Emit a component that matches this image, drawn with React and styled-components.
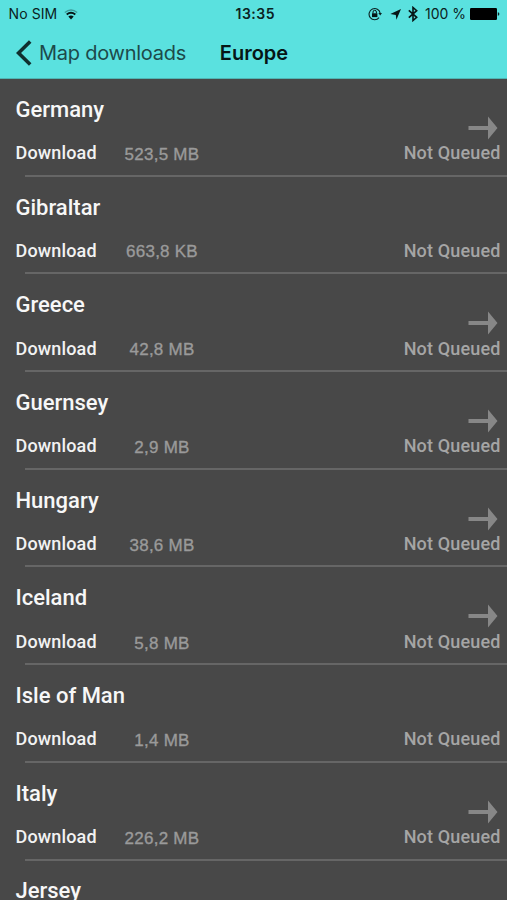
import React, { Component } from "react";
import styled, { createGlobalStyle } from "styled-components";

const GlobalStyle = createGlobalStyle`
  * {
    box-sizing: border-box;
  }

  body {
    margin: 0;
    background: #484848;
  }
`;

const Screen = styled.div`
  width: 100%;
  height: 900px;
  overflow: hidden;
  background: #484848;
  font-family: Roboto, "Liberation Sans", sans-serif;
`;

const Header = styled.header`
  height: 79px;
  background: #5ae1df;
  border-bottom: 1px solid #4fb5b4;
  color: #0b2222;
  font-family: Inter, "Liberation Sans", sans-serif;
`;

const StatusBar = styled.div`
  display: grid;
  grid-template-columns: 1fr auto 1fr;
  align-items: center;
  height: 28px;
  padding: 0 7px 0 8.5px;
  font-size: 14px;
  line-height: 28px;
  white-space: nowrap;
`;

const Carrier = styled.div`
  display: flex;
  align-items: center;
  gap: 7px;
  letter-spacing: 0.1px;
`;

const Clock = styled.div`
  padding-left: 2px;
  font-weight: 600;
  letter-spacing: 0.5px;
`;

const Indicators = styled.div`
  display: flex;
  align-items: center;
  justify-content: flex-end;
`;

const Percent = styled.span`
  margin: 0 4px 0 7px;
  letter-spacing: 0;
`;

const NavBar = styled.nav`
  display: grid;
  grid-template-columns: 1fr auto 1fr;
  align-items: center;
  height: 50px;
  padding: 0 15px 0 16px;
`;

const Back = styled.div`
  display: flex;
  align-items: center;
  gap: 7px;
  color: #1d4a4a;
  font-size: 20px;
  letter-spacing: -0.25px;
  white-space: nowrap;
`;

const Title = styled.h1`
  margin: 0;
  color: #061616;
  font-size: 20px;
  font-weight: 600;
  letter-spacing: 0;
`;

const Row = styled.section`
  display: flex;
  flex-direction: column;
  height: 97.7px;
  padding: 17.9px 0 0 15.5px;
`;

const Country = styled.h2`
  margin: 0;
  color: #f7f7f7;
  font-size: 22px;
  font-weight: 500;
  line-height: 26px;
  letter-spacing: 0;
`;

const ArrowSlot = styled.div`
  display: flex;
  justify-content: flex-end;
  height: 20px;
  margin-top: -7px;
  padding-right: 9px;
`;

const Details = styled.div`
  display: grid;
  grid-template-columns: 96.5px 100px 1fr;
  height: 39.7px;
  padding-right: 6.5px;
  padding-top: 6.5px;
  color: #a5a5a5;
  font-size: 18px;
  font-weight: 500;
  line-height: 22px;
  letter-spacing: 0.15px;
  white-space: nowrap;
`;

const Action = styled.span`
  color: #f2f2f2;
`;

const Size = styled.span`
  padding-top: 1.7px;
  color: #9a9a9a;
  font-family: "Liberation Sans", sans-serif;
  font-size: 17px;
  letter-spacing: 0.25px;
  text-align: center;
  -webkit-text-stroke: 0.35px #9a9a9a;
`;

const Status = styled.span`
  text-align: right;
`;

const Divider = styled.div`
  height: 2px;
  flex-shrink: 0;
  margin-left: 9.5px;
  background: #666;
`;

const countries = [
  { name: "Germany", size: "523,5 MB", regions: true },
  { name: "Gibraltar", size: "663,8 KB", regions: false },
  { name: "Greece", size: "42,8 MB", regions: true },
  { name: "Guernsey", size: "2,9 MB", regions: true },
  { name: "Hungary", size: "38,6 MB", regions: true },
  { name: "Iceland", size: "5,8 MB", regions: true },
  { name: "Isle of Man", size: "1,4 MB", regions: false },
  { name: "Italy", size: "226,2 MB", regions: true },
  { name: "Jersey" }
];

const WifiIcon = () => (
  <svg width="14" height="11" viewBox="0 0 14 11" fill="none">
    <path d="M0.8 3.5Q7 -1.5 13.2 3.5" stroke="#3c9a99" strokeWidth="1.3" />
    <path d="M2.7 5.4Q7 2 11.3 5.4" stroke="#061616" strokeWidth="1.9" />
    <path d="M4.3 7.5Q7 5.4 9.7 7.5L7 10.4Z" fill="#061616" />
  </svg>
);

const LockIcon = () => (
  <svg width="14" height="14" viewBox="0 0 14 14" fill="none">
    <path
      d="M11.1 10.6A5.6 5.6 0 1 1 12.2 6.3"
      stroke="#0b2222"
      strokeWidth="1.1"
    />
    <path d="M10.4 6H14L12.2 8.6Z" fill="#0b2222" />
    <rect x="4" y="6.3" width="5.4" height="3.8" fill="#061616" />
    <path d="M5 6.5V5a1.7 1.7 0 0 1 3.4 0v1.5" stroke="#061616" />
  </svg>
);

const LocationIcon = styled(({ className }) => (
  <svg className={className} width="11" height="11" viewBox="0 0 11 11">
    <path d="M11 0L6.4 10.8L5.8 6L0.3 5Z" fill="#061616" />
  </svg>
))`
  margin: 0 7px 0 8px;
`;

const BluetoothIcon = () => (
  <svg width="10" height="16" viewBox="0 0 10 16" fill="none">
    <path
      d="M0.8 4.4L8.7 11.3L5 14.5V1.5L8.7 4.7L0.8 11.6"
      stroke="#061616"
      strokeWidth="1.6"
    />
  </svg>
);

const BatteryIcon = () => (
  <svg width="30" height="12" viewBox="0 0 30 12">
    <rect width="27" height="12" rx="1.2" fill="#000" />
    <path d="M27.8 4.2Q29.4 4.5 29.4 6Q29.4 7.5 27.8 7.8Z" fill="#0b2222" />
  </svg>
);

const BackIcon = () => (
  <svg width="16" height="26" viewBox="0 0 16 26" fill="none">
    <path d="M14.2 1.5L2.5 13L14.2 24.5" stroke="#102f2f" strokeWidth="3.6" />
  </svg>
);

const ArrowIcon = () => (
  <svg width="30" height="24" viewBox="0 0 30 24" fill="#878787">
    <path d="M0.5 10H20V0.5L29.5 12L20 23.5V14H0.5Z" />
  </svg>
);

class CountryRow extends Component {
  render() {
    const { name, size, regions } = this.props;

    return (
      <Row>
        <Country>{name}</Country>
        {size && (
          <>
            <ArrowSlot>{regions && <ArrowIcon />}</ArrowSlot>
            <Details>
              <Action>Download</Action>
              <Size>{size}</Size>
              <Status>Not Queued</Status>
            </Details>
            <Divider />
          </>
        )}
      </Row>
    );
  }
}

class App extends Component {
  render() {
    return (
      <Screen>
        <GlobalStyle />
        <Header>
          <StatusBar>
            <Carrier>
              No SIM
              <WifiIcon />
            </Carrier>
            <Clock>13:35</Clock>
            <Indicators>
              <LockIcon />
              <LocationIcon />
              <BluetoothIcon />
              <Percent>100 %</Percent>
              <BatteryIcon />
            </Indicators>
          </StatusBar>
          <NavBar>
            <Back>
              <BackIcon />
              Map downloads
            </Back>
            <Title>Europe</Title>
          </NavBar>
        </Header>
        <main>
          {countries.map(country => (
            <CountryRow key={country.name} {...country} />
          ))}
        </main>
      </Screen>
    );
  }
}

export default App;
